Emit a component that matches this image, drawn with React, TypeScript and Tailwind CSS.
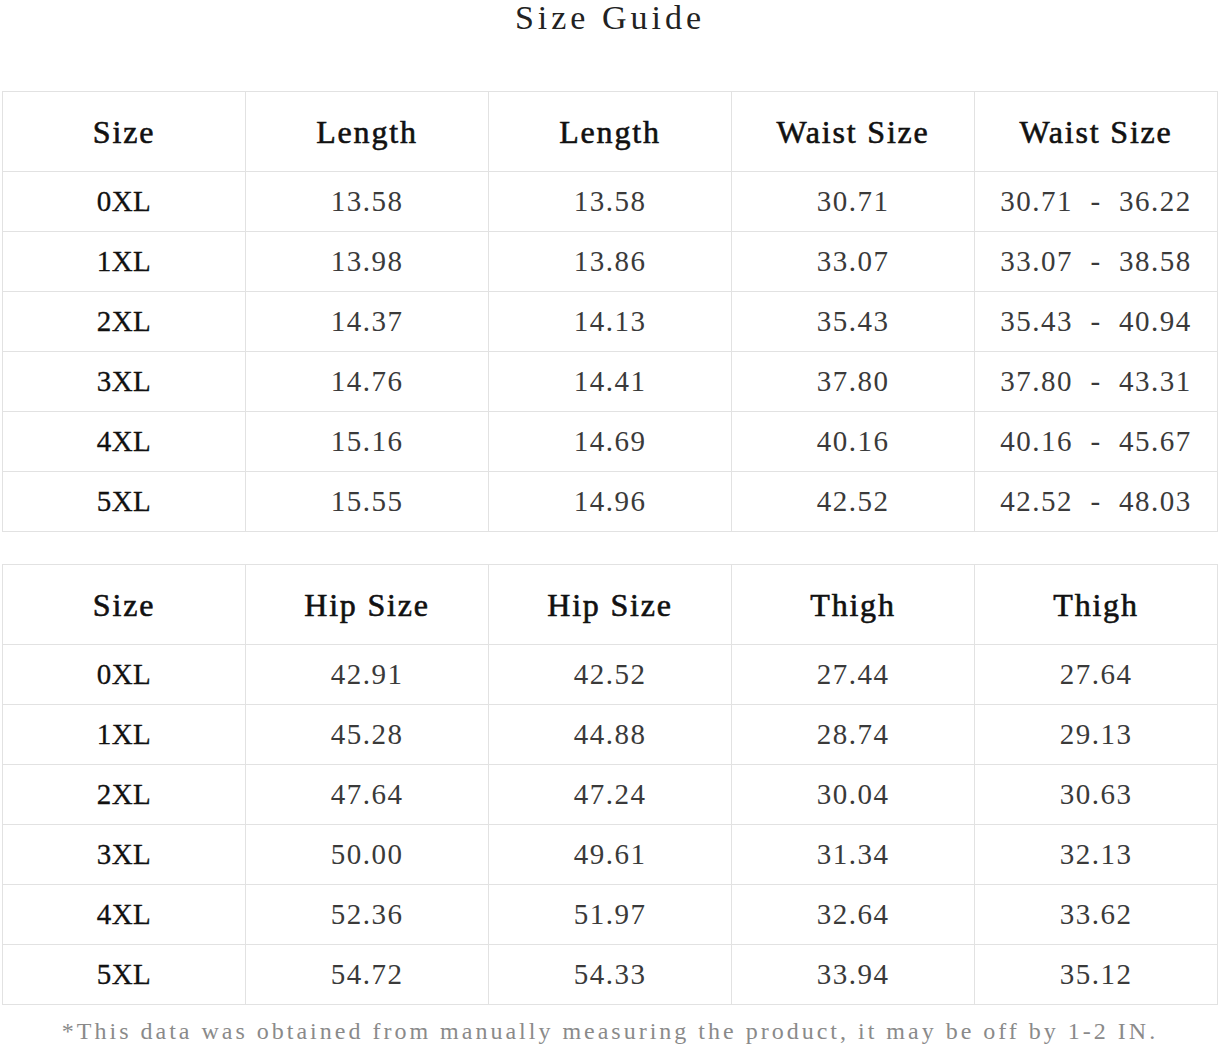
import React from 'react';

// Size chart data: first table = lengths + waist, second = hip + thigh
const topHeaders = ['Size', 'Length', 'Length', 'Waist Size', 'Waist Size'];
const topRows = [
  ['0XL', '13.58', '13.58', '30.71', '30.71 - 36.22'],
  ['1XL', '13.98', '13.86', '33.07', '33.07 - 38.58'],
  ['2XL', '14.37', '14.13', '35.43', '35.43 - 40.94'],
  ['3XL', '14.76', '14.41', '37.80', '37.80 - 43.31'],
  ['4XL', '15.16', '14.69', '40.16', '40.16 - 45.67'],
  ['5XL', '15.55', '14.96', '42.52', '42.52 - 48.03'],
];

const bottomHeaders = ['Size', 'Hip Size', 'Hip Size', 'Thigh', 'Thigh'];
const bottomRows = [
  ['0XL', '42.91', '42.52', '27.44', '27.64'],
  ['1XL', '45.28', '44.88', '28.74', '29.13'],
  ['2XL', '47.64', '47.24', '30.04', '30.63'],
  ['3XL', '50.00', '49.61', '31.34', '32.13'],
  ['4XL', '52.36', '51.97', '32.64', '33.62'],
  ['5XL', '54.72', '54.33', '33.94', '35.12'],
];

const SizeTable = ({ headers, rows }: { headers: string[]; rows: string[][] }) => {
  return (
    <table className="w-[1215px] table-fixed border-collapse border border-[#e2e2e2]">
      <thead>
        <tr className="h-[80px]">
          {headers.map((h, i) => (
            <th
              key={i}
              className="w-[243px] border border-[#e2e2e2] text-center align-middle text-[32px] font-normal tracking-[1.8px] text-[#111] [-webkit-text-stroke:0.6px_#111]"
            >
              {h}
            </th>
          ))}
        </tr>
      </thead>
      <tbody>
        {rows.map((row, r) => (
          <tr key={r} className="h-[60px]">
            {row.map((cell, c) => (
              <td
                key={c}
                className={
                  c === 0
                    ? 'border border-[#e2e2e2] text-center align-middle text-[29px] text-[#111] tracking-[0.5px] [-webkit-text-stroke:0.3px_#111]'
                    : 'border border-[#e2e2e2] text-center align-middle text-[29px] text-[#3a3a3a] tracking-[1.5px] whitespace-pre'
                }
              >
                {c === 4 && cell.includes('-') ? cell.replace(' - ', '  -  ') : cell}
              </td>
            ))}
          </tr>
        ))}
      </tbody>
    </table>
  );
};

export default function App() {
  return (
    <div className="w-[1220px] bg-white font-['Liberation_Serif',_'Times_New_Roman',_serif]">
      <h1 className="mb-[55px] h-[36px] text-center text-[34px] font-normal leading-[36px] tracking-[4px] text-[#222]">
        Size Guide
      </h1>

      <div className="pl-[2px]">
        <SizeTable headers={topHeaders} rows={topRows} />
        <div className="h-[32px]" />
        <SizeTable headers={bottomHeaders} rows={bottomRows} />
      </div>

      <p className="mt-[10px] text-center text-[24px] leading-[32px] tracking-[3px] text-[#8a8a8a]">
        *This data was obtained from manually measuring the product, it may be off by 1-2 IN.
      </p>
    </div>
  );
}
